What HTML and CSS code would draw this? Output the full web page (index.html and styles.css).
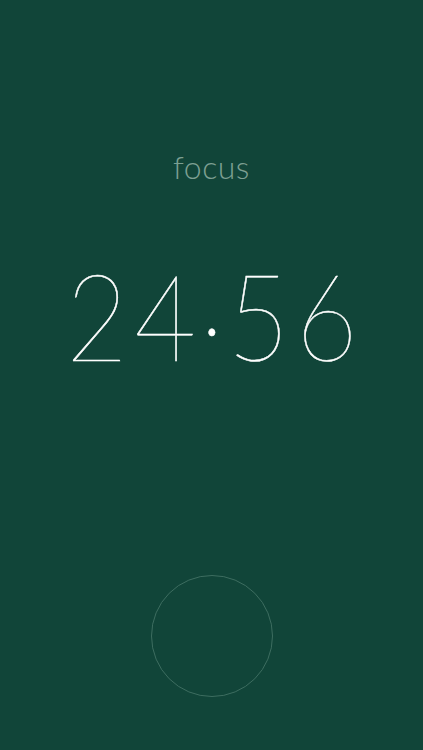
FILE: index.html
```html
<!DOCTYPE html>
<html lang="en">
<head>
<meta charset="utf-8">
<title>focus</title>
<link rel="stylesheet" href="styles.css">
</head>
<body>
<main class="screen">
  <div class="mode">focus</div>
  <div class="timer">24<span class="sep">·</span>56</div>
  <div class="spacer"></div>
  <button class="start" aria-label="Start"></button>
</main>
</body>
</html>
```
FILE: styles.css
```css
html, body {
  margin: 0;
  padding: 0;
  background: #114539;
}
.screen {
  width: 423px;
  height: 750px;
  box-sizing: border-box;
  display: flex;
  flex-direction: column;
  align-items: center;
  padding-top: 145px;
  padding-bottom: 53px;
  font-family: "Lato", "Inter", sans-serif;
}
.mode {
  font-size: 32px;
  font-weight: 300;
  line-height: 44px;
  color: #7c9f92;
  letter-spacing: 0.5px;
}
.timer {
  margin-top: 51px;
  padding-left: 7px;
  font-size: 120px;
  font-weight: 100;
  line-height: 150px;
  color: #ffffff;
  -webkit-text-stroke: 0.5px #ffffff;
  letter-spacing: 7px;
  transform: scaleX(0.89);
  white-space: nowrap;
}
.sep {
  display: inline-block;
  margin: 0 -3px;
  vertical-align: -0.06em;
}
.spacer {
  flex: 1;
}
.start {
  width: 122px;
  height: 122px;
  border-radius: 50%;
  border: 1.5px solid #3d6d60;
  background: transparent;
  padding: 0;
}
```
